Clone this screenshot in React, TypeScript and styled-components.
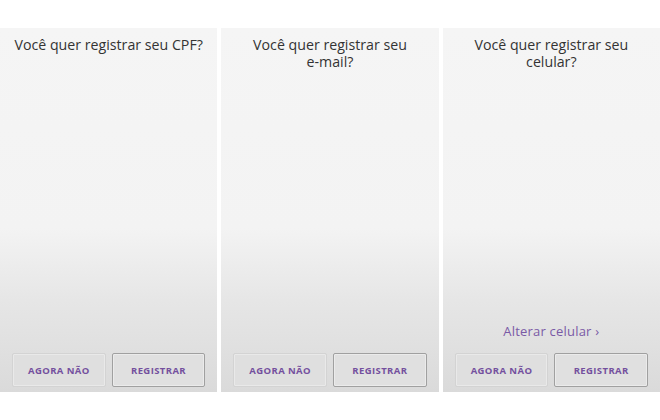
import React from "react";
import styled, { createGlobalStyle } from "styled-components";

const Global = createGlobalStyle`
  html, body { margin: 0; padding: 0; background: #ffffff; }
  body { width: 660px; height: 420px; overflow: hidden; font-family: "Open Sans", "Noto Sans", sans-serif; }
`;

const Page = styled.div`
  width: 660px;
  height: 420px;
  padding-top: 28px;
  box-sizing: border-box;
  background: #ffffff;
`;

const Row = styled.div`
  display: flex;
  gap: 4px;
  height: 364px;
`;

const Panel = styled.div`
  flex: 1 1 0;
  min-width: 0;
  display: flex;
  flex-direction: column;
  align-items: center;
  background: linear-gradient(
    to bottom,
    #f5f5f5 0%,
    #f3f3f3 55%,
    #e6e6e6 75%,
    #dadada 100%
  );
  box-sizing: border-box;
  padding: 8px 12px 5px;
`;

const Title = styled.div`
  font-size: 14.2px;
  line-height: 17px;
  color: #333333;
  text-align: center;
  white-space: nowrap;
`;

const Spacer = styled.div`
  flex: 1;
`;

const Link = styled.div`
  font-size: 13px;
  color: #7a5aa6;
  margin-bottom: 13px;
  letter-spacing: 0.2px;
`;

const Buttons = styled.div`
  display: flex;
  gap: 6px;
  width: 100%;
`;

const Button = styled.div<{ $primary?: boolean }>`
  flex: 1 1 0;
  height: 34px;
  display: flex;
  align-items: center;
  justify-content: center;
  box-sizing: border-box;
  border: 1px solid ${(p) => (p.$primary ? "#a0a0a0" : "#d3d3d3")};
  border-radius: 2px;
  background: ${(p) => (p.$primary ? "#e0e0e0" : "#dfdfdf")};
  box-shadow: ${(p) =>
    p.$primary ? "inset 0 0 0 1px #ebebeb" : "inset 0 0 0 1px #e9e9e9"};
  color: #74509e;
  font-size: 9.5px;
  font-weight: 700;
  letter-spacing: 0.4px;
`;

const panels = [
  { title: ["Você quer registrar seu CPF?"], link: null },
  { title: ["Você quer registrar seu", "e-mail?"], link: null },
  { title: ["Você quer registrar seu", "celular?"], link: "Alterar celular ›" },
];

export default function App() {
  return (
    <Page>
      <Global />
      <Row>
        {panels.map((p, i) => (
          <Panel key={i}>
            <Title>
              {p.title.map((t, j) => (
                <React.Fragment key={j}>
                  {j > 0 && <br />}
                  {t}
                </React.Fragment>
              ))}
            </Title>
            <Spacer />
            {p.link && <Link>{p.link}</Link>}
            <Buttons>
              <Button>AGORA NÃO</Button>
              <Button $primary>REGISTRAR</Button>
            </Buttons>
          </Panel>
        ))}
      </Row>
    </Page>
  );
}
